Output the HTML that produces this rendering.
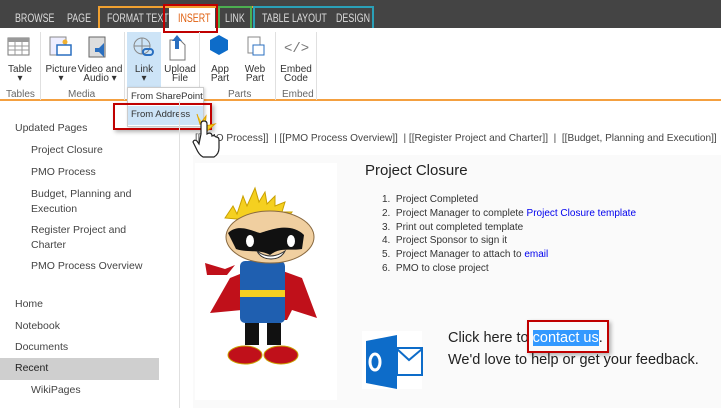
<!DOCTYPE html>
<html><head><meta charset="utf-8"><style>
*{margin:0;padding:0;box-sizing:border-box}
body{width:721px;height:408px;overflow:hidden;position:relative;background:#fff;font-family:"Liberation Sans",sans-serif;color:#444}
.a{position:absolute;white-space:nowrap}
.tab{position:absolute;font-size:12px;color:#ddd;top:11px;transform:scaleX(0.74);transform-origin:left}
.rl{position:absolute;font-size:10px;color:#333;text-align:center;line-height:9px;white-space:nowrap}
.gl{position:absolute;top:89px;font-size:10px;color:#666}
.sep{position:absolute;top:32px;width:1px;height:68px;background:#e0e0e0}
.nav{position:absolute;font-size:10.5px;color:#444}
</style></head><body>
<div class="a" style="left:0;top:0;width:721px;height:28px;background:#444"></div>
<div class="a" style="left:98px;top:6px;width:276px;height:22px;border-top:2px solid #f0a030;border-left:2px solid #f0a030"></div>
<div class="a" style="left:218px;top:6px;width:34px;height:22px;border:2px solid #4caf50;border-bottom:none"></div>
<div class="a" style="left:253px;top:6px;width:121px;height:22px;border:2px solid #2aa0b8;border-bottom:none"></div>
<div class="a" style="left:169px;top:8px;width:46px;height:22px;background:#fff"></div>
<div class="tab" style="left:15px">BROWSE</div>
<div class="tab" style="left:67px">PAGE</div>
<div class="tab" style="left:107px">FORMAT TEXT</div>
<div class="tab" style="left:178px;color:#e06010">INSERT</div>
<div class="tab" style="left:225px">LINK</div>
<div class="tab" style="left:262px">TABLE LAYOUT</div>
<div class="tab" style="left:336px">DESIGN</div>
<div class="a" style="left:163px;top:4px;width:55px;height:29px;border:2px solid #c00000"></div>
<div class="a" style="left:0;top:28px;width:721px;height:73px;border-bottom:2px solid #f4a040"></div>
<div class="sep" style="left:40px"></div><div class="sep" style="left:124px"></div><div class="sep" style="left:199px"></div><div class="sep" style="left:275px"></div><div class="sep" style="left:316px"></div>
<div class="a" style="left:127px;top:32px;width:34px;height:56px;background:#cde4f7"></div>
<svg class="a" style="left:0;top:32px" width="330" height="30">
<rect x="8" y="6" width="21" height="17" fill="#fff" stroke="#777"/><rect x="8" y="6" width="21" height="4" fill="#999"/>
<path d="M8 14H29M8 18H29M15 6V23M22 6V23" stroke="#999"/>
<rect x="50" y="5" width="16" height="18" fill="#eef" stroke="#888"/><circle cx="65" cy="10" r="2.5" fill="#f0b030"/><rect x="57" y="13" width="14" height="10" fill="#fff" stroke="#2a6fc0" stroke-width="1.5"/>
<rect x="89" y="5" width="16" height="20" fill="#ddd" stroke="#666"/><path d="M95 16h4l5-5v14l-5-5h-4z" fill="#2a6fc0"/>
<circle cx="142" cy="14" r="8" fill="none" stroke="#888"/><path d="M134 14h16M142 6v16" stroke="#888"/><rect x="143" y="17" width="10" height="6" rx="3" fill="none" stroke="#2a6fc0" stroke-width="2"/>
<path d="M170 8h10l5 5v15h-15z" fill="#fff" stroke="#777"/><path d="M177 3l-5 6h3v8h4v-8h3z" fill="#2a6fc0"/>
<path d="M210 8l9-5 9 5v10l-9 5-9-5z" fill="#0d6cc9"/>
<rect x="248" y="5" width="12" height="16" fill="#fff" stroke="#888"/><rect x="253" y="13" width="11" height="10" fill="#fff" stroke="#2a6fc0"/>
<text x="284" y="20" font-size="14" fill="#777" font-family="Liberation Mono">&lt;/&gt;</text>
</svg>
<div class="rl" style="left:5px;top:65px;width:30px">Table<br>▾</div>
<div class="rl" style="left:44px;top:65px;width:34px">Picture<br>▾</div>
<div class="rl" style="left:76px;top:65px;width:48px">Video and<br>Audio ▾</div>
<div class="rl" style="left:128px;top:65px;width:32px">Link<br>▾</div>
<div class="rl" style="left:162px;top:65px;width:36px">Upload<br>File</div>
<div class="rl" style="left:205px;top:65px;width:30px">App<br>Part</div>
<div class="rl" style="left:240px;top:65px;width:30px">Web<br>Part</div>
<div class="rl" style="left:280px;top:65px;width:32px">Embed<br>Code</div>
<div class="gl" style="left:6px">Tables</div><div class="gl" style="left:68px">Media</div><div class="gl" style="left:228px">Parts</div><div class="gl" style="left:282px">Embed</div>
<div class="a" style="left:127px;top:87px;width:77px;height:40px;background:#fff;border:1px solid #ccc;box-shadow:1px 1px 3px rgba(0,0,0,.2)"></div>
<div class="a" style="left:128px;top:106px;width:75px;height:19px;background:#cde4f7"></div>
<div class="a" style="left:131px;top:91px;font-size:9.5px;color:#333">From SharePoint</div>
<div class="a" style="left:131px;top:109px;font-size:9.5px;color:#333">From Address</div>
<div class="a" style="left:113px;top:103px;width:99px;height:27px;border:2px solid #c00000;box-shadow:2px 2px 4px rgba(0,0,0,.3)"></div>
<div class="a" style="left:179px;top:101px;width:1px;height:307px;background:#e0e0e0"></div>
<div class="a" style="left:0;top:358px;width:159px;height:22px;background:#cfcfcf"></div>
<div class="nav" style="left:15px;top:122px">Updated Pages</div>
<div class="nav" style="left:31px;top:144px">Project Closure</div>
<div class="nav" style="left:31px;top:166px">PMO Process</div>
<div class="nav" style="left:31px;top:188px">Budget, Planning and</div>
<div class="nav" style="left:31px;top:203px">Execution</div>
<div class="nav" style="left:31px;top:224px">Register Project and</div>
<div class="nav" style="left:31px;top:239px">Charter</div>
<div class="nav" style="left:31px;top:260px">PMO Process Overview</div>
<div class="nav" style="left:15px;top:298px">Home</div>
<div class="nav" style="left:15px;top:320px">Notebook</div>
<div class="nav" style="left:15px;top:341px">Documents</div>
<div class="nav" style="left:15px;top:362px;color:#222">Recent</div>
<div class="nav" style="left:31px;top:384px">WikiPages</div>
<div class="a" style="left:193px;top:155px;width:528px;height:253px;background:#fafafa"></div>
<div class="a" style="left:195px;top:133px;font-size:10.1px;color:#444">[[PMO Process]]&nbsp; | [[PMO Process Overview]]&nbsp; | [[Register Project and Charter]]&nbsp; |&nbsp; [[Budget, Planning and Execution]]</div>
<div class="a" style="left:195px;top:163px;width:142px;height:237px;background:#fff"></div>
<svg class="a" style="left:195px;top:163px" width="142" height="237">
<path d="M30 55l8-12 4 8 6-18 4 10 8-18 4 14 6-10 2 12 8-8 0 10 10-4-3 10 10 0-6 8 8 4z" fill="#f5d020" stroke="#c9a000"/>
<path d="M15 150l20-35 20-8 30 0 22 8 15 40-25-8-5 10-40 0-5-10z" fill="#c0101a"/>
<path d="M10 100l20 6 10-4-8 10-20 0z" fill="#c0101a"/>
<rect x="45" y="98" width="45" height="62" rx="5" fill="#1f5fb0"/>
<rect x="45" y="127" width="45" height="7" fill="#f5d020"/>
<rect x="50" y="160" width="14" height="22" fill="#111"/><rect x="72" y="160" width="14" height="22" fill="#111"/>
<ellipse cx="50" cy="192" rx="17" ry="9" fill="#c0101a" stroke="#c9a000"/><ellipse cx="86" cy="192" rx="17" ry="9" fill="#c0101a" stroke="#c9a000"/>
<ellipse cx="75" cy="74" rx="44" ry="26" fill="#f0cfa0" stroke="#8a6a40"/>
<path d="M33 70c10-10 24-2 32 0 8-2 30-12 44 2l-2 14c-12 2-22-2-32 6-10-6-22-2-34-6z" fill="#111"/>
<ellipse cx="55" cy="78" rx="4" ry="6" fill="#fff"/><ellipse cx="96" cy="78" rx="4" ry="6" fill="#fff"/>
<path d="M62 88q13 10 28 0q-4 8-14 8t-14-8z" fill="#fff" stroke="#333"/>
</svg>
<div class="a" style="left:365px;top:162px;font-size:15px;color:#222">Project Closure</div>
<div class="a" style="left:382px;top:193px;font-size:10px;line-height:13.8px;color:#333">
1.&nbsp; Project Completed<br>2.&nbsp; Project Manager to complete <span style="color:#0000ee">Project Closure template</span><br>3.&nbsp; Print out completed template<br>4.&nbsp; Project Sponsor to sign it<br>5.&nbsp; Project Manager to attach to <span style="color:#0000ee">email</span><br>6.&nbsp; PMO to close project</div>
<div class="a" style="left:362px;top:331px;width:60px;height:58px;background:#fff"></div>
<svg class="a" style="left:363px;top:333px" width="60" height="56">
<path d="M3 8l31-6v54l-31-6z" fill="#0d6cc9"/>
<ellipse cx="12" cy="29" rx="5" ry="8" fill="none" stroke="#fff" stroke-width="3"/>
<rect x="34" y="15" width="25" height="27" fill="#fff" stroke="#0d6cc9" stroke-width="2"/>
<path d="M34 16l12 11 13-11" fill="none" stroke="#0d6cc9" stroke-width="2"/>
</svg>
<div class="a" style="left:448px;top:330px;font-size:14.5px;color:#222">Click here to <span style="background:#3399ff;color:#fff">contact us</span>.</div>
<div class="a" style="left:448px;top:352px;font-size:14.5px;color:#222">We'd love to help or get your feedback.</div>
<div class="a" style="left:527px;top:320px;width:82px;height:33px;border:2px solid #c00000;box-shadow:2px 2px 4px rgba(0,0,0,.3)"></div>
<svg class="a" style="left:183px;top:110px" width="40" height="50">
<path d="M14 4l3 10 6-8-1 10 10-2-8 7" fill="#f5d020" stroke="#e0a000"/>
<path d="M18 24v-10q0-3 3-3t3 3v10l2-1q3 0 3 3 2-1 4 1 3 0 3 3v8q0 6-5 9h-11q-4-2-7-9l-3-6q1-3 4-1l2 3z" fill="#fff" stroke="#222" stroke-width="1.2"/>
</svg>
</body></html>
